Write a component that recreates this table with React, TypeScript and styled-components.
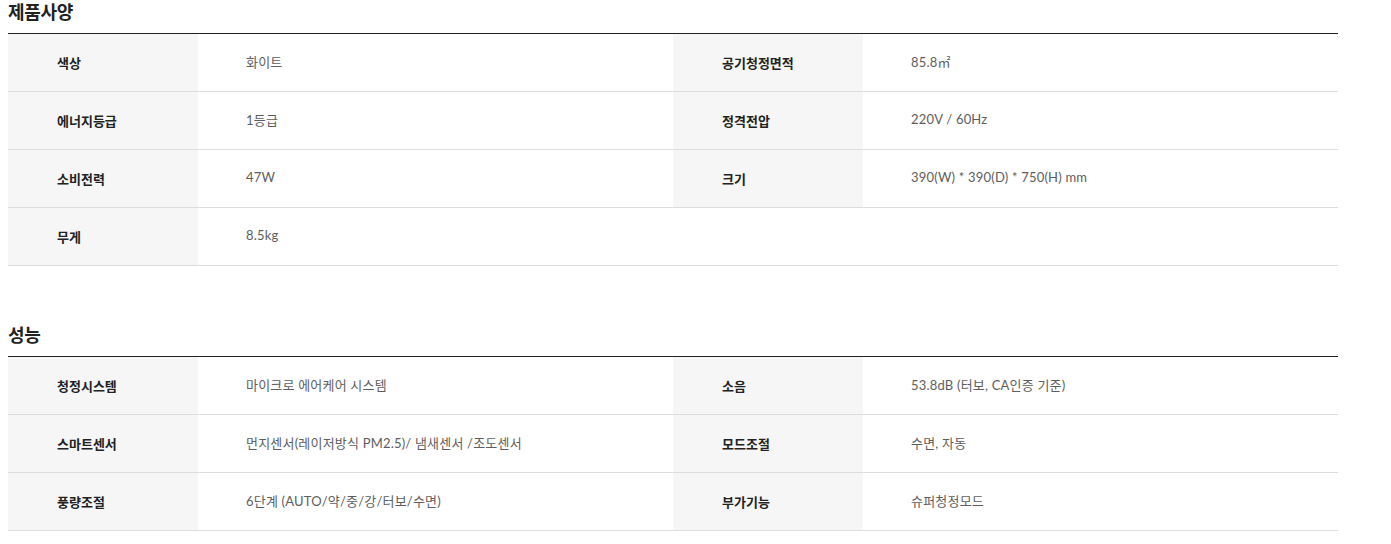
import React from "react";
import styled, { createGlobalStyle } from "styled-components";

const Global = createGlobalStyle`
  html, body { margin: 0; padding: 0; background: #fff; }
  body { font-family: "Noto Sans CJK KR", "Noto Sans", sans-serif; }
`;

const Page = styled.div`
  padding: 0 0 0 8px;
  width: 1330px;
`;

const Section = styled.section`
  & + & { margin-top: 57px; }
`;

const Heading = styled.h2`
  margin: 0;
  height: 33px;
  font-size: 18px;
  line-height: 23px;
  font-weight: 700;
  color: #222;
  font-family: "Noto Sans CJK KR", sans-serif;
  letter-spacing: -0.3px;
`;

const Table = styled.div`
  border-top: 1px solid #222;
`;

const Row = styled.div`
  display: grid;
  grid-template-columns: 190px 475px 190px 475px;
  border-bottom: 1px solid #ddd;
  height: 57px;
`;

const Label = styled.div<{ $empty?: boolean }>`
  background: ${(p) => (p.$empty ? "transparent" : "#f6f6f6")};
  display: flex;
  align-items: center;
  padding-left: 49px;
  font-size: 13px;
  font-weight: 700;
  color: #222;
  font-family: "Noto Sans CJK KR", sans-serif;
`;

const Value = styled.div`
  display: flex;
  align-items: center;
  padding-left: 48px;
  padding-bottom: 3px;
  font-size: 13px;
  color: #5e5e5e;
  letter-spacing: 0.2px;
  font-family: Lato, "Noto Sans CJK KR", sans-serif;
`;

type Spec = [string, string];

const specs: Spec[][] = [
  [["색상", "화이트"], ["공기청정면적", "85.8㎡"]],
  [["에너지등급", "1등급"], ["정격전압", "220V / 60Hz"]],
  [["소비전력", "47W"], ["크기", "390(W) * 390(D) * 750(H) mm"]],
  [["무게", "8.5kg"]],
];

const perf: Spec[][] = [
  [["청정시스템", "마이크로 에어케어 시스템"], ["소음", "53.8dB (터보, CA인증 기준)"]],
  [["스마트센서", "먼지센서(레이저방식 PM2.5)/ 냄새센서 /조도센서"], ["모드조절", "수면, 자동"]],
  [["풍량조절", "6단계 (AUTO/약/중/강/터보/수면)"], ["부가기능", "슈퍼청정모드"]],
];

function SpecTable({ title, rows }: { title: string; rows: Spec[][] }) {
  return (
    <Section>
      <Heading>{title}</Heading>
      <Table>
        {rows.map((r, i) => (
          <Row key={i}>
            {[0, 1].map((j) =>
              r[j] ? (
                <React.Fragment key={j}>
                  <Label>{r[j][0]}</Label>
                  <Value>{r[j][1]}</Value>
                </React.Fragment>
              ) : (
                <React.Fragment key={j}>
                  <Label $empty />
                  <Value />
                </React.Fragment>
              )
            )}
          </Row>
        ))}
      </Table>
    </Section>
  );
}

export default function App() {
  return (
    <Page>
      <Global />
      <SpecTable title="제품사양" rows={specs} />
      <SpecTable title="성능" rows={perf} />
    </Page>
  );
}
